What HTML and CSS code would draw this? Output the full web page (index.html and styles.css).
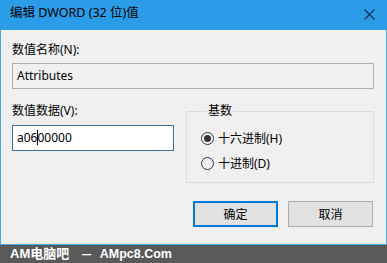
FILE: index.html
```html
<!DOCTYPE html>
<html lang="zh-CN">
<head>
  <meta charset="UTF-8" />
  <title>编辑 DWORD (32 位)值</title>
  <link rel="stylesheet" href="styles.css">
</head>
<body>

<div class="window">
  <div class="titlebar">
    <span class="title">编辑 DWORD (32 位)值</span>
    <svg class="close" width="11" height="11" viewBox="0 0 11 11">
      <path d="M0.5 0.5 L10.5 10.5 M10.5 0.5 L0.5 10.5" stroke="#1a2a5a" stroke-width="1.1" fill="none"/>
    </svg>
  </div>

  <div class="content">
    <div class="label">数值名称(N):</div>
    <div class="textbox readonly">Attributes</div>

    <div class="row">
      <div class="left">
        <div class="label">数值数据(V):</div>
        <div class="textbox focused">a06<span class="caret"></span>00000</div>
      </div>

      <fieldset class="group">
        <legend>基数</legend>
        <label class="radio"><span class="dot checked"></span>十六进制(H)</label>
        <label class="radio"><span class="dot"></span>十进制(D)</label>
      </fieldset>
    </div>

    <div class="buttons">
      <button class="btn default">确定</button>
      <button class="btn">取消</button>
    </div>
  </div>
</div>

<div class="footer">AM电脑吧 <span class="dash">–</span> <span class="site">AMpc8.Com</span></div>

</body>
</html>
```

FILE: styles.css
```css
* { margin: 0; padding: 0; box-sizing: border-box; }

body {
  width: 387px;
  height: 263px;
  background: #595959;
  font-family: "Noto Sans", "Noto Sans CJK SC", sans-serif;
  font-size: 12px;
  color: #000;
  overflow: hidden;
}

.window {
  height: 245px;
  background: #f0f0f0;
  border: 1px solid #4aa6e8;
  border-top: none;
}

.titlebar {
  height: 30px;
  background: #2b9de8;
  margin: 0 -1px;
  display: flex;
  align-items: center;
  justify-content: space-between;
  padding: 0 12px 4px 10px;
}

.title {
  font-size: 12.5px;
  line-height: 16px;
}

.close {
  display: block;
  margin-top: 2px;
}

.content {
  padding: 12px 12px 0 11px;
}

.label {
  line-height: 16px;
  height: 16px;
}

.textbox {
  height: 26px;
  line-height: 24px;
  padding: 0 4px;
  border: 1px solid #adadad;
  background: #fff;
  margin-top: 5px;
  white-space: nowrap;
}

.textbox.readonly {
  background: #f0f0f0;
}

.textbox.focused {
  border-color: #3c6e97;
  margin-top: 6px;
}

.caret {
  display: inline-block;
  width: 1px;
  height: 15px;
  margin-right: -1px;
  background: #000;
  vertical-align: -3px;
}

.row {
  display: flex;
  margin-top: 14px;
}

.left {
  width: 162px;
}

.group {
  margin-left: 12px;
  width: 188px;
  height: 80px;
  border: 1px solid #dcdcdc;
  padding: 11px 0 0 14px;
}

.group legend {
  margin-left: 6px;
  padding: 0 1px;
  line-height: 16px;
}

.radio {
  display: flex;
  align-items: center;
  height: 16px;
  margin-bottom: 9px;
}

.dot {
  width: 13px;
  height: 13px;
  border: 1px solid #333;
  border-radius: 50%;
  margin-right: 4px;
  display: flex;
  align-items: center;
  justify-content: center;
}

.dot.checked::after {
  content: "";
  width: 7px;
  height: 7px;
  border-radius: 50%;
  background: #333;
}

.buttons {
  display: flex;
  justify-content: flex-end;
  gap: 10px;
  margin-top: 18px;
  padding-right: 1px;
}

.btn {
  width: 85px;
  height: 26px;
  background: #e1e1e1;
  border: 1px solid #adadad;
  font-family: inherit;
  font-size: 12px;
}

.btn.default {
  border: 2px solid #0078d7;
}

.footer {
  height: 18px;
  line-height: 18px;
  padding-left: 10px;
  color: #fff;
  font-family: "Liberation Sans", "Noto Sans CJK SC", sans-serif;
  font-weight: bold;
  font-size: 13px;
  word-spacing: 6px;
}

.dash {
  display: inline-block;
  margin-left: 4px;
  transform: scaleX(1.4);
}

.site {
  font-size: 12.5px;
}
```
